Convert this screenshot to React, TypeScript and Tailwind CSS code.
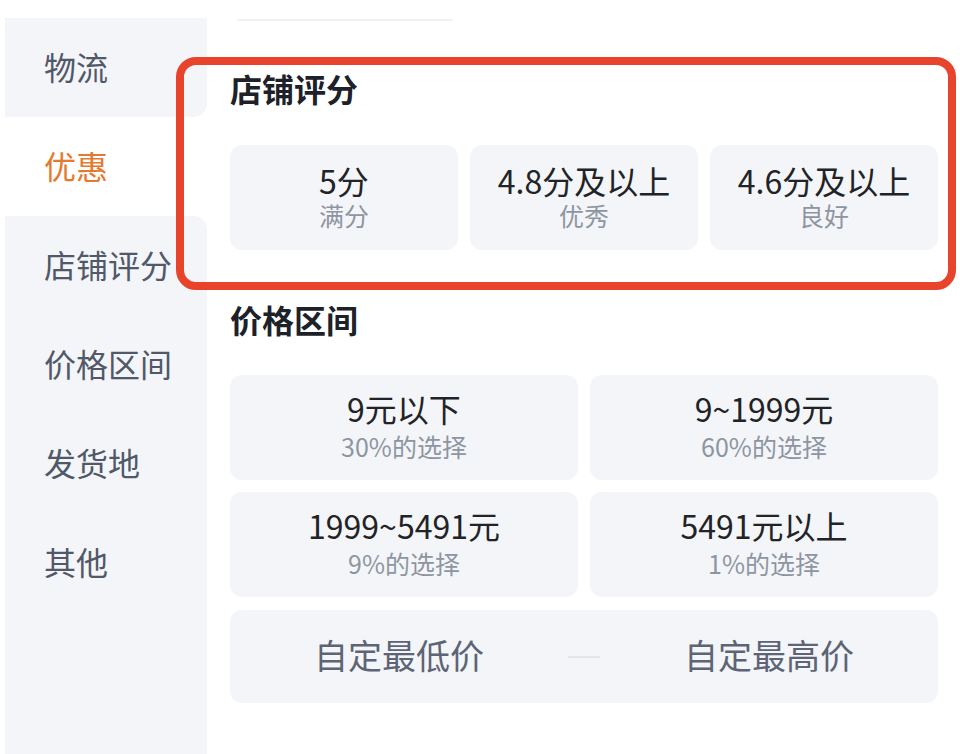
import React from "react";

const sideItems = [
  { label: "物流", cls: "bg-[#f3f5f8] rounded-br-[14px] text-[#505869]" },
  { label: "优惠", cls: "bg-white text-[#e47a2f]" },
  { label: "店铺评分", cls: "bg-[#f3f5f8] rounded-tr-[14px] text-[#505869]" },
  { label: "价格区间", cls: "bg-[#f3f5f8] text-[#505869]" },
  { label: "发货地", cls: "bg-[#f3f5f8] text-[#505869]" },
  { label: "其他", cls: "bg-[#f3f5f8] text-[#505869]" },
];

const ratings = [
  { main: "5分", sub: "满分" },
  { main: "4.8分及以上", sub: "优秀" },
  { main: "4.6分及以上", sub: "良好" },
];

const prices = [
  { main: "9元以下", sub: "30%的选择" },
  { main: "9~1999元", sub: "60%的选择" },
  { main: "1999~5491元", sub: "9%的选择" },
  { main: "5491元以上", sub: "1%的选择" },
];

export default function App() {
  return (
    <div className="relative w-[964px] h-[754px] bg-white flex overflow-hidden font-['Noto_Sans_CJK_SC',sans-serif]">
      {/* Sidebar */}
      <div className="ml-[5px] mt-[18px] w-[202px] flex flex-col">
        {sideItems.map((it) => (
          <div
            key={it.label}
            className={`h-[99px] flex items-center pl-[39px] pb-[4px] text-[32px] leading-[40px] ${it.cls}`}
          >
            {it.label}
          </div>
        ))}
        <div className="flex-1 bg-[#f3f5f8]" />
      </div>

      {/* Content */}
      <div className="flex-1 flex flex-col pl-[23px] pr-[26px] pt-[19px]">
        <div className="ml-[7px] w-[216px] h-[2px] bg-[#f1f1f2] rounded-full" />

        <div className="mt-[47px] text-[32px] leading-[40px] font-bold text-[#1d2129]">店铺评分</div>
        <div className="mt-[37px] grid grid-cols-3 gap-[12px]">
          {ratings.map((r) => (
            <div
              key={r.main}
              className="h-[105px] rounded-[12px] bg-[#f3f5f8] flex flex-col items-center justify-center pb-[1px]"
            >
              <div className="text-[32px] leading-[36px] text-[#222326]">{r.main}</div>
              <div className="text-[25px] leading-[34px] text-[#8e95a2]">{r.sub}</div>
            </div>
          ))}
        </div>

        <div className="mt-[49px] text-[32px] leading-[40px] font-bold text-[#1d2129]">价格区间</div>
        <div className="mt-[36px] grid grid-cols-2 gap-[12px]">
          {prices.map((p) => (
            <div
              key={p.main}
              className="h-[105px] rounded-[12px] bg-[#f3f5f8] flex flex-col items-center justify-center pb-[1px]"
            >
              <div className="text-[32px] leading-[38px] text-[#222326]">{p.main}</div>
              <div className="text-[25px] leading-[38px] text-[#8e95a2]">{p.sub}</div>
            </div>
          ))}
        </div>
        <div className="mt-[13px] h-[93px] rounded-[12px] bg-[#f3f5f8] flex items-center">
          <div className="flex-1 text-center text-[34px] leading-[44px] pb-[4px] text-[#5c6475]">自定最低价</div>
          <div className="w-[32px] h-[2px] bg-[#e3e5e9]" />
          <div className="flex-1 text-center text-[34px] leading-[44px] pb-[4px] text-[#5c6475]">自定最高价</div>
        </div>
      </div>

      {/* Annotation highlight */}
      <div className="absolute left-[176px] top-[57px] w-[780px] h-[233px] border-[8px] border-[#e8432b] rounded-[20px] pointer-events-none" />
    </div>
  );
}
